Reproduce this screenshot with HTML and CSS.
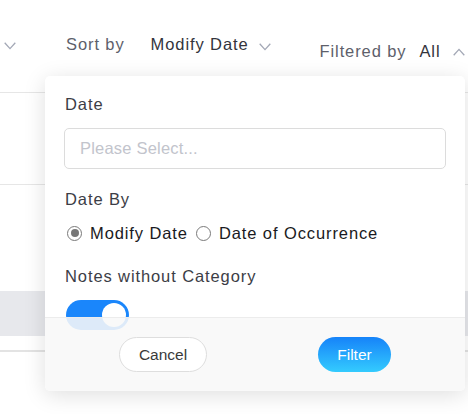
FILE: index.html
```html
<!DOCTYPE html>
<html>
<head>
<meta charset="utf-8">
<link rel="stylesheet" href="styles.css">
</head>
<body>
<div class="page">
  <div class="toolbar">
    <svg class="chev first" width="12" height="8" viewBox="0 0 12 8"><polyline points="0.7,0.8 6,6.6 11.3,0.8" fill="none" stroke="#a3a8b6" stroke-width="1.3"/></svg>
    <span class="lbl sort-lbl">Sort by</span>
    <span class="val sort-val">Modify Date</span>
    <svg class="chev second" width="12" height="8" viewBox="0 0 12 8"><polyline points="0.7,0.8 6,6.6 11.3,0.8" fill="none" stroke="#a3a8b6" stroke-width="1.3"/></svg>
    <div class="filter-group">
      <span class="lbl">Filtered by</span>
      <span class="val all-val">All</span>
      <svg class="chev up" width="12" height="8" viewBox="0 0 12 8"><polyline points="0.7,7.2 6,1.4 11.3,7.2" fill="none" stroke="#a3a8b6" stroke-width="1.3"/></svg>
    </div>
  </div>
  <div class="row row1"></div>
  <div class="row row2"></div>
  <div class="band"></div>
  <div class="row row3"></div>

  <div class="popup">
    <div class="popup-body">
      <div class="field-label">Date</div>
      <div class="input">Please Select...</div>
      <div class="field-label date-by">Date By</div>
      <div class="radios">
        <span class="radio checked"></span><span class="radio-text">Modify Date</span>
        <span class="radio"></span><span class="radio-text">Date of Occurrence</span>
      </div>
      <div class="field-label notes">Notes without Category</div>
      <div class="switch"><span class="knob"></span></div>
    </div>
    <div class="popup-footer">
      <button class="btn cancel">Cancel</button>
      <button class="btn primary">Filter</button>
    </div>
  </div>
</div>
</body>
</html>
```
FILE: styles.css
```css
html, body {
  margin: 0;
  padding: 0;
  background: #fff;
}
body {
  font-family: "Liberation Sans", Arial, sans-serif;
  width: 468px;
  height: 414px;
  overflow: hidden;
}
.page {
  position: relative;
  width: 468px;
  height: 414px;
  overflow: hidden;
}
.toolbar {
  height: 92px;
  border-bottom: 1px solid #e6e6e6;
  display: flex;
  align-items: flex-start;
  font-size: 16.5px;
  line-height: 20px;
  letter-spacing: 0.9px;
  white-space: nowrap;
  width: 600px;
}
.toolbar > *, .filter-group > * { flex: none; }
.chev { display: block; }
.chev.first { margin-left: 4px; margin-top: 42px; }
.lbl { color: #5e5f6b; }
.val { color: #33343c; }
.sort-lbl { margin-left: 50px; margin-top: 34px; }
.sort-val { margin-left: 26px; margin-top: 34px; }
.chev.second { margin-left: 10px; margin-top: 43px; }
.filter-group {
  display: flex;
  align-items: flex-start;
  margin-left: 49px;
  margin-top: 41px;
}
.all-val { margin-left: 13px; }
.chev.up { margin-left: 12px; margin-top: 7px; }

.row { border-bottom: 1px solid #e6e6e6; }
.row1 { height: 91px; }
.row2 { height: 106px; border-bottom: none; }
.band { height: 45px; background: #e7e8ec; }
.row3 { height: 14px; border-bottom: 2px solid #e3e3e3; }

.popup {
  position: absolute;
  left: 45px;
  top: 76px;
  width: 420px;
  height: 315px;
  background: #fff;
  border-radius: 5px;
  box-shadow: 0 4px 22px rgba(0, 0, 0, 0.13);
  overflow: hidden;
  display: flex;
  flex-direction: column;
}
.popup-body {
  padding: 18px 19px 0 19px;
  font-size: 16.5px;
  line-height: 20px;
}
.field-label {
  color: #3c3d46;
  letter-spacing: 0.9px;
  padding-left: 1px;
}
.input {
  margin-top: 14px;
  height: 41px;
  box-sizing: border-box;
  border: 1px solid #dcdcdc;
  border-radius: 5px;
  padding-left: 15px;
  line-height: 39px;
  color: #c2c4cc;
  letter-spacing: 0.2px;
}
.date-by { margin-top: 20px; }
.radios {
  margin-top: 14px;
  display: flex;
  align-items: center;
  height: 20px;
  padding-left: 3px;
  white-space: nowrap;
}
.radio {
  width: 15px;
  height: 15px;
  box-sizing: border-box;
  border: 1px solid #7a7a7a;
  border-radius: 50%;
  position: relative;
  flex: none;
}
.radio.checked::after {
  content: "";
  position: absolute;
  left: 2.5px;
  top: 2.5px;
  width: 8px;
  height: 8px;
  border-radius: 50%;
  background: #777;
}
.radio-text {
  color: #1a1a22;
  letter-spacing: 0.9px;
  margin-left: 8px;
  margin-right: 8px;
}
.notes { margin-top: 23px; }
.switch {
  margin-top: 14px;
  margin-left: 2px;
  width: 63px;
  height: 30px;
  border-radius: 15px;
  background: #1a86fb;
  position: relative;
}
.knob {
  position: absolute;
  right: 3px;
  top: 3px;
  width: 24px;
  height: 24px;
  border-radius: 50%;
  background: #fff;
}
.popup-footer {
  position: relative;
  margin-top: -13px;
  flex: 1;
  background: rgba(248, 248, 248, 0.88);
  border-top: 1px solid #ececec;
  display: flex;
  justify-content: center;
  align-items: flex-start;
  gap: 111px;
  padding-top: 19px;
}
.btn {
  height: 35px;
  border-radius: 18px;
  font-family: "Liberation Sans", Arial, sans-serif;
  font-size: 15.5px;
  padding: 0;
  cursor: pointer;
}
.cancel {
  width: 88px;
  background: #fff;
  border: 1px solid #dedede;
  color: #3a3a3a;
}
.primary {
  width: 73px;
  border: none;
  color: #fff;
  background: linear-gradient(180deg, #1683f9 0%, #34cbfe 100%);
}
```
